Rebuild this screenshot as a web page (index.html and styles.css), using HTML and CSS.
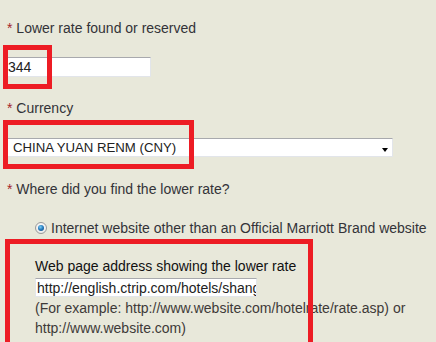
FILE: index.html
```html
<!DOCTYPE html>
<html>
<head>
<meta charset="utf-8">
<link rel="stylesheet" href="styles.css">
</head>
<body>
<div class="page">
  <form class="form">
    <div class="label label-first"><span class="req">*</span> Lower rate found or reserved</div>
    <input class="text-input rate-input" type="text" value="344">

    <div class="label label-currency"><span class="req">*</span> Currency</div>
    <div class="select-wrap">
      <div class="select">CHINA YUAN RENM (CNY)</div>
      <span class="arrow"></span>
    </div>

    <div class="label label-where"><span class="req">*</span> Where did you find the lower rate?</div>
    <div class="radio-row">
      <span class="radio"><span class="radio-dot"></span></span>
      <span class="radio-text">Internet website other than an Official Marriott Brand website</span>
    </div>

    <div class="web-block">
      <div class="web-label">Web page address showing the lower rate</div>
      <input class="text-input url-input" type="text" value="http://english.ctrip.com/hotels/shanghai">
      <div class="help">(For example: http://www.website.com/hotelrate/rate.asp) or http://www.website.com)</div>
    </div>
  </form>

  <div class="mark mark-rate"></div>
  <div class="mark mark-currency"></div>
  <div class="mark mark-web"></div>
</div>
</body>
</html>
```

FILE: styles.css
```css
html, body {
  margin: 0;
  padding: 0;
  background: #e8e8da;
}

.page {
  position: relative;
  width: 436px;
  height: 342px;
  overflow: hidden;
  font-family: "Liberation Sans", Arial, sans-serif;
  font-size: 14px;
  color: #333338;
}

.form {
  display: flex;
  flex-direction: column;
  align-items: flex-start;
  padding: 20px 0 0 7px;
  margin: 0;
}

.label {
  line-height: 16px;
  white-space: nowrap;
}

.req {
  color: #a3262c;
}

.text-input {
  box-sizing: border-box;
  font-family: "Liberation Sans", Arial, sans-serif;
  font-size: 14px;
  color: #222;
  background: #fff;
  border: 1px solid #e2e5ea;
  border-top-color: #a8a9ad;
  border-radius: 0;
  margin: 0;
  outline: none;
}

.rate-input {
  margin-top: 21px;
  width: 144px;
  height: 20px;
  padding: 0;
}

.label-currency {
  margin-top: 23px;
}

.select-wrap {
  position: relative;
  margin-top: 22px;
}

.select {
  box-sizing: border-box;
  width: 386px;
  height: 19px;
  line-height: 17px;
  padding-left: 5px;
  font-size: 13.2px;
  background: #fff;
  border: 1px solid #e2e5ea;
  border-top-color: #a8a9ad;
  color: #222;
}

.arrow {
  position: absolute;
  right: 5px;
  top: 10px;
  width: 0;
  height: 0;
  border-left: 3.5px solid transparent;
  border-right: 3.5px solid transparent;
  border-top: 4px solid #000;
}

.label-where {
  margin-top: 24px;
}

.radio-row {
  display: flex;
  align-items: center;
  margin-top: 23px;
  padding-left: 28px;
  line-height: 16px;
  white-space: nowrap;
}

.radio {
  box-sizing: border-box;
  width: 12px;
  height: 12px;
  border-radius: 50%;
  border: 1px solid #9a9a9a;
  background: radial-gradient(circle at 50% 40%, #ffffff 0%, #e4e4e4 100%);
  display: flex;
  align-items: center;
  justify-content: center;
  margin-right: 4px;
  margin-top: -1px;
}

.radio-dot {
  width: 6px;
  height: 6px;
  border-radius: 50%;
  background: radial-gradient(circle at 40% 35%, #7fd0f5 0%, #2a7fc0 45%, #0b3f78 100%);
}

.web-block {
  display: flex;
  flex-direction: column;
  align-items: flex-start;
  margin-top: 22px;
  padding-left: 28px;
}

.web-label {
  line-height: 16px;
  color: #111;
  white-space: nowrap;
}

.url-input {
  margin-top: 4px;
  width: 222px;
  height: 19px;
  padding: 0 0 0 1px;
}

.help {
  margin-top: 1px;
  line-height: 20px;
  color: #3e3a38;
  max-width: 395px;
}

.mark {
  position: absolute;
  box-sizing: border-box;
  border: 5px solid #ed1c24;
}

.mark-rate {
  left: 3px;
  top: 45px;
  width: 49px;
  height: 44px;
}

.mark-currency {
  left: 3px;
  top: 120px;
  width: 191px;
  height: 49px;
}

.mark-web {
  left: 5px;
  top: 239px;
  width: 308px;
  height: 120px;
}
```
